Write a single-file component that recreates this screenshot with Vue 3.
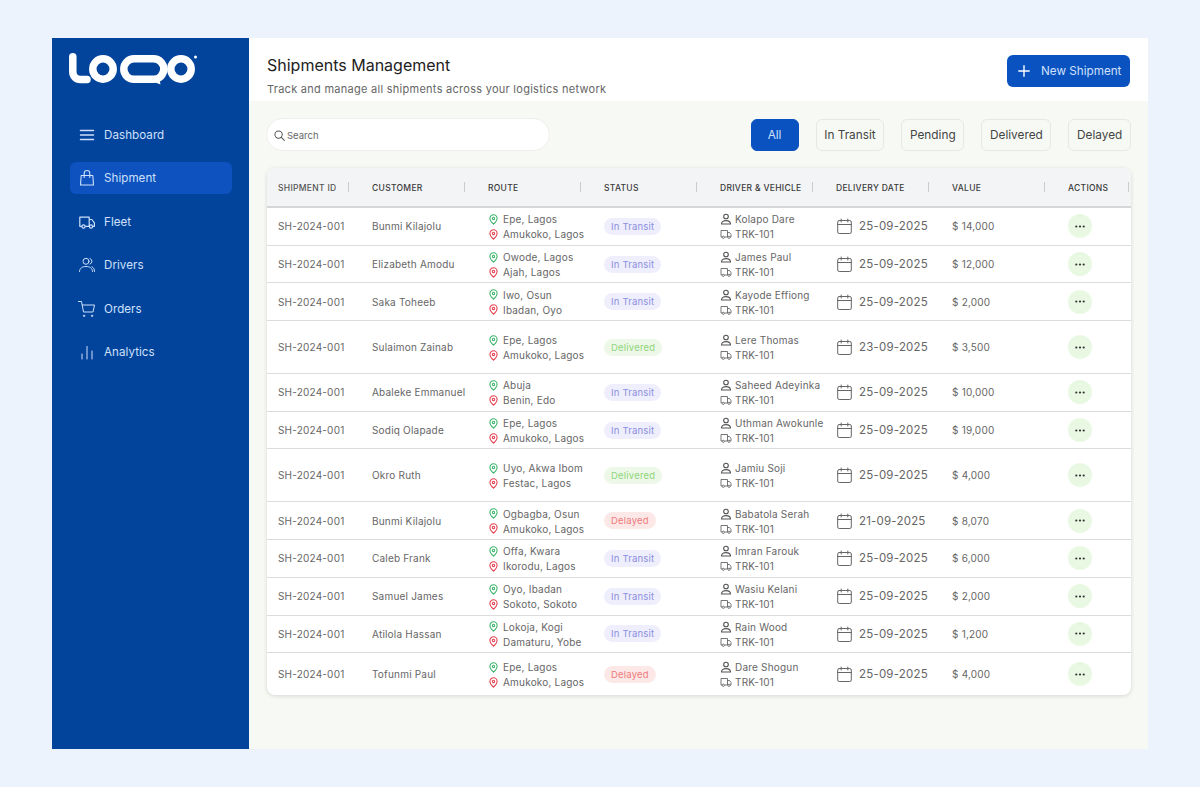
<template>
  <div class="page">
    <div class="frame">
      <aside class="sidebar">
        <svg class="logo" width="130" height="34" viewBox="0 0 130 34" fill="none">
          <path d="M3.800 3.800v15.200a7.500 7.500 0 0 0 7.500 7.500h6.700" stroke="#fff" stroke-width="7.500" stroke-linecap="round" stroke-linejoin="round" />
          <circle cx="34" cy="16" r="10.200" stroke="#fff" stroke-width="7.500" />
          <rect x="54.800" y="5.800" width="40" height="20.500" rx="10.200" stroke="#fff" stroke-width="7.500" />
          <path d="M80 27h10.500l1 4.500z" fill="#fff" />
          <circle cx="112" cy="16" r="10.200" stroke="#fff" stroke-width="7.500" />
          <circle cx="126.500" cy="4" r="1.500" fill="#fff" />
        </svg>
        <nav class="nav">
          <a class="nav-item">
            <svg class="nav-icon" viewBox="0 0 16 16" fill="none" stroke="currentColor" stroke-width="1.500" stroke-linecap="round"><path d="M1.500 3.500h13M1.500 8h13M1.500 12.500h13" /></svg>
            Dashboard
          </a>
          <a class="nav-item active">
            <svg class="nav-icon" viewBox="0 0 16 16" fill="none" stroke="currentColor" stroke-width="1.100" stroke-linejoin="round"><path d="M2.200 5.500h11.600l.7 9.500H1.500z" /><path d="M5.200 8V3.300a2.800 2.800 0 0 1 5.600 0V8" /></svg>
            Shipment
          </a>
          <a class="nav-item">
            <svg class="nav-icon" viewBox="0 0 16 16" fill="none" stroke="currentColor" stroke-width="1.200" stroke-linejoin="round"><path d="M2.800 12.300H.8V3.200h9.400v9.100H6.200M10.200 5.500h2.600l2.600 3.300v3.500h-1.600M10.200 12.300h.2" /><circle cx="4.500" cy="12.500" r="1.600" /><circle cx="12" cy="12.500" r="1.600" /></svg>
            Fleet
          </a>
          <a class="nav-item">
            <svg class="nav-icon" viewBox="0 0 16 16" fill="none" stroke="currentColor" stroke-width="1" stroke-linecap="round"><circle cx="7" cy="4.300" r="3" /><path d="M.5 14.500c0-3.400 2.800-5 6.500-5s6.500 1.600 6.500 5M11 1.500a3 3 0 0 1 0 5.600M13 9.800c1.600.7 2.500 2.400 2.500 4.700" /></svg>
            Drivers
          </a>
          <a class="nav-item">
            <svg class="nav-icon" viewBox="0 0 16 16" fill="none" stroke="currentColor" stroke-width="1" stroke-linecap="round" stroke-linejoin="round"><path d="M-.5 .5H2.500l2 10.500h9.500L15.500 4H3.300" /><circle cx="5" cy="14.800" r=".7" /><circle cx="13" cy="14.800" r=".7" /></svg>
            Orders
          </a>
          <a class="nav-item">
            <svg class="nav-icon" viewBox="0 0 16 16" fill="none" stroke="currentColor" stroke-width="1" stroke-linecap="round"><path d="M3 15V10M8 15V2.500M13 15V7" /></svg>
            Analytics
          </a>
        </nav>
      </aside>

      <main class="main">
        <header class="topbar">
          <div>
            <h1>Shipments Management</h1>
            <p>Track and manage all shipments across your logistics network</p>
          </div>
          <button class="new-btn">
            <svg width="12" height="12" viewBox="0 0 12 12" fill="none" stroke="#fff" stroke-width="1.400" stroke-linecap="round"><path d="M6 .8v10.400M.8 6h10.400" /></svg>
            New Shipment
          </button>
        </header>

        <section class="content">
          <div class="toolbar">
            <div class="search">
              <svg width="11" height="11" viewBox="0 0 12 12" fill="none" stroke="#555" stroke-width="1.100" stroke-linecap="round"><circle cx="5" cy="5" r="4" /><path d="M8 8l3.300 3.300" /></svg>
              Search
            </div>
            <div class="filters">
              <button v-for="f in filters" :key="f" class="filter" :class="{ on: f === 'All' }">{{ f }}</button>
            </div>
          </div>

          <div class="table">
            <div class="row head">
              <div v-for="h in headers" :key="h" class="th"><span>{{ h }}</span></div>
            </div>
            <div v-for="(s, i) in shipments" :key="i" class="row" :class="{ tall: s.status === 'Delivered', last: i === shipments.length - 1 }">
              <div class="td">SH-2024-001</div>
              <div class="td">{{ s.customer }}</div>
              <div class="td stack">
                <div class="line route">
                  <svg class="pin" viewBox="0 0 10 12" fill="none" stroke="#3db56b" stroke-width="1.200"><path d="M5 11.200C2.600 8.900 1 7 1 4.800a4 4 0 0 1 8 0C9 7 7.400 8.900 5 11.200z" /><circle cx="5" cy="4.800" r="1.300" /></svg>
                  {{ s.from }}
                </div>
                <div class="line route">
                  <svg class="pin" viewBox="0 0 10 12" fill="none" stroke="#e5404f" stroke-width="1.200"><path d="M5 11.200C2.600 8.900 1 7 1 4.800a4 4 0 0 1 8 0C9 7 7.400 8.900 5 11.200z" /><circle cx="5" cy="4.800" r="1.300" /></svg>
                  {{ s.to }}
                </div>
              </div>
              <div class="td">
                <span class="badge" :class="s.status.replace(' ', '').toLowerCase()">{{ s.status }}</span>
              </div>
              <div class="td stack">
                <div class="line driver">
                  <svg class="small-icon" viewBox="0 0 12 12" fill="none" stroke="#555" stroke-width="1.100" stroke-linecap="round"><circle cx="6" cy="3.500" r="2.300" /><path d="M1.500 11c0-2.400 2-3.400 4.500-3.400s4.500 1 4.500 3.400z" /></svg>
                  {{ s.driver }}
                </div>
                <div class="line driver">
                  <svg class="small-icon" viewBox="0 0 12 12" fill="none" stroke="#666" stroke-width=".9" stroke-linejoin="round"><path d="M2.200 9H1V2.500h6.500V9H4.500M7.500 4.500h2l1.500 2V9h-.8M7.500 9h.3" /><circle cx="3.300" cy="9.300" r="1.100" /><circle cx="9" cy="9.300" r="1.100" /></svg>
                  TRK-101
                </div>
              </div>
              <div class="td date">
                <svg width="15" height="16" viewBox="0 0 15 16" fill="none" stroke="#666" stroke-width="1" stroke-linecap="round"><rect x=".7" y="2.500" width="13.600" height="13" rx="1.500" /><path d="M.7 6.500h13.600M4.200 1v3M10.800 1v3" /></svg>
                {{ s.date }}
              </div>
              <div class="td">$ {{ s.value }}</div>
              <div class="td">
                <button class="action">
                  <svg width="10" height="3" viewBox="0 0 10 3" fill="#333"><circle cx="1.300" cy="1.500" r="1.100" /><circle cx="5" cy="1.500" r="1.100" /><circle cx="8.700" cy="1.500" r="1.100" /></svg>
                </button>
              </div>
            </div>
          </div>
        </section>
      </main>
    </div>
  </div>
</template>

<script setup>
const filters = ['All', 'In Transit', 'Pending', 'Delivered', 'Delayed']
const headers = ['SHIPMENT ID', 'CUSTOMER', 'ROUTE', 'STATUS', 'DRIVER & VEHICLE', 'DELIVERY DATE', 'VALUE', 'ACTIONS']

const shipments = [
  { customer: 'Bunmi Kilajolu', from: 'Epe, Lagos', to: 'Amukoko, Lagos', status: 'In Transit', driver: 'Kolapo Dare', date: '25-09-2025', value: '14,000' },
  { customer: 'Elizabeth Amodu', from: 'Owode, Lagos', to: 'Ajah, Lagos', status: 'In Transit', driver: 'James Paul', date: '25-09-2025', value: '12,000' },
  { customer: 'Saka Toheeb', from: 'Iwo, Osun', to: 'Ibadan, Oyo', status: 'In Transit', driver: 'Kayode Effiong', date: '25-09-2025', value: '2,000' },
  { customer: 'Sulaimon Zainab', from: 'Epe, Lagos', to: 'Amukoko, Lagos', status: 'Delivered', driver: 'Lere Thomas', date: '23-09-2025', value: '3,500' },
  { customer: 'Abaleke Emmanuel', from: 'Abuja', to: 'Benin, Edo', status: 'In Transit', driver: 'Saheed Adeyinka', date: '25-09-2025', value: '10,000' },
  { customer: 'Sodiq Olapade', from: 'Epe, Lagos', to: 'Amukoko, Lagos', status: 'In Transit', driver: 'Uthman Awokunle', date: '25-09-2025', value: '19,000' },
  { customer: 'Okro Ruth', from: 'Uyo, Akwa Ibom', to: 'Festac, Lagos', status: 'Delivered', driver: 'Jamiu Soji', date: '25-09-2025', value: '4,000' },
  { customer: 'Bunmi Kilajolu', from: 'Ogbagba, Osun', to: 'Amukoko, Lagos', status: 'Delayed', driver: 'Babatola Serah', date: '21-09-2025', value: '8,070' },
  { customer: 'Caleb Frank', from: 'Offa, Kwara', to: 'Ikorodu, Lagos', status: 'In Transit', driver: 'Imran Farouk', date: '25-09-2025', value: '6,000' },
  { customer: 'Samuel James', from: 'Oyo, Ibadan', to: 'Sokoto, Sokoto', status: 'In Transit', driver: 'Wasiu Kelani', date: '25-09-2025', value: '2,000' },
  { customer: 'Atilola Hassan', from: 'Lokoja, Kogi', to: 'Damaturu, Yobe', status: 'In Transit', driver: 'Rain Wood', date: '25-09-2025', value: '1,200' },
  { customer: 'Tofunmi Paul', from: 'Epe, Lagos', to: 'Amukoko, Lagos', status: 'Delayed', driver: 'Dare Shogun', date: '25-09-2025', value: '4,000' }
]
</script>

<style scoped>
.page {
  height: 787px;
  box-sizing: border-box;
  padding: 38px 52px;
  background: #edf3fd;
  font-family: Inter, 'Liberation Sans', sans-serif;
}

.frame {
  display: flex;
  height: 711px;
}

.sidebar {
  width: 197px;
  flex-shrink: 0;
  box-sizing: border-box;
  padding: 15px 17px 0 18px;
  background: #02449c;
}

.logo {
  display: block;
  margin-left: -1px;
}

.nav {
  display: flex;
  flex-direction: column;
  gap: 11.600px;
  margin-top: 31px;
}

.nav-item {
  display: flex;
  align-items: center;
  gap: 9px;
  height: 32px;
  box-sizing: border-box;
  padding: 1px 0 0 9px;
  border-radius: 6px;
  color: #cfe0fb;
  font-size: 11.600px;
  letter-spacing: 0.05px;
}

.nav-item.active {
  background: #0d52be;
}

.nav-icon {
  width: 16px;
  height: 16px;
  flex-shrink: 0;
  overflow: visible;
}

.main {
  flex: 1;
  display: flex;
  flex-direction: column;
  min-width: 0;
}

.topbar {
  height: 63px;
  box-sizing: border-box;
  display: flex;
  justify-content: space-between;
  align-items: flex-start;
  padding: 16px 18px 0 18px;
  background: #fff;
}

h1 {
  margin: 0;
  font-size: 16px;
  line-height: 22px;
  font-weight: 400;
  color: #222;
}

.topbar p {
  margin: 5px 0 0;
  font-size: 11px;
  line-height: 16px;
  letter-spacing: 0.27px;
  color: #666;
}

.new-btn {
  display: flex;
  align-items: center;
  gap: 11px;
  width: 123px;
  height: 32px;
  margin-top: 1px;
  padding: 0 0 0 11px;
  border: 0;
  border-radius: 6px;
  background: #0a52bf;
  color: #cfe0fb;
  font-family: inherit;
  font-size: 11.700px;
}

.content {
  flex: 1;
  padding: 17px 17px 0 18px;
  background: #f7faf4;
}

.toolbar {
  display: flex;
  justify-content: space-between;
  align-items: center;
  height: 33px;
}

.search {
  display: flex;
  align-items: center;
  gap: 2px;
  width: 284px;
  height: 33px;
  box-sizing: border-box;
  margin-left: -1px;
  padding: 1px 0 0 7px;
  border: 1px solid #eeeeec;
  border-radius: 17px;
  background: #fff;
  color: #666;
  font-size: 9.500px;
}

.filters {
  display: flex;
  gap: 17px;
}

.filter {
  height: 32px;
  padding: 0 7.700px;
  border: 1px solid #e6e8e3;
  border-radius: 6px;
  background: #f7faf4;
  color: #444;
  font-family: inherit;
  font-size: 11.800px;
}

.filter.on {
  width: 48px;
  background: #0a52bf;
  border-color: #0a52bf;
  color: #cfe0fb;
}

.table {
  margin-top: 17px;
  width: 864px;
  border-radius: 8px;
  background: #fff;
  box-shadow: 0 1px 4px rgba(0, 0, 0, 0.14);
  overflow: hidden;
}

.row {
  display: grid;
  grid-template-columns: 94px repeat(6, 116px) 74px;
  height: 37.700px;
  border-bottom: 1px solid #dcdcdc;
  box-sizing: border-box;
}

.row.head {
  height: 40px;
  border-bottom: 2px solid #d6d6d6;
  background: #f3f4f6;
}

.row.tall {
  height: 53px;
}

.row.last {
  height: 42px;
  border-bottom: 0;
}

.th {
  position: relative;
  display: flex;
  align-items: center;
  padding: 1px 0 0 11px;
  font-size: 8.500px;
  font-weight: 500;
  letter-spacing: 0.3px;
  color: #3a3a3a;
}

.th:first-child {
  color: #555;
}

.th span {
  white-space: nowrap;
}

.th::after {
  content: '';
  position: absolute;
  right: 12px;
  top: 14px;
  height: 10px;
  width: 1px;
  background: #ccc;
}

.th:last-child::after {
  right: 2px;
}

.td {
  display: flex;
  align-items: center;
  padding-left: 11px;
  min-width: 0;
  white-space: nowrap;
  font-size: 10px;
  letter-spacing: 0.2px;
  color: #666;
}

.td.stack {
  flex-direction: column;
  align-items: flex-start;
  justify-content: center;
  gap: 0;
  padding-top: 1px;
}

.line {
  display: flex;
  align-items: center;
  height: 15px;
}

.line.route {
  gap: 5px;
  padding-left: 1px;
}

.line.driver {
  gap: 3px;
}

.pin {
  width: 9px;
  height: 11px;
}

.small-icon {
  width: 12px;
  height: 12px;
}

.badge {
  height: 17px;
  line-height: 17px;
  padding: 0 7px;
  border-radius: 9px;
  font-size: 9.500px;
}

.intransit {
  background: #eeeefc;
  color: #8c8fe0;
}

.delivered {
  background: #edf8e8;
  color: #8fd67c;
}

.delayed {
  background: #fde8e8;
  color: #ee7b7b;
}

.td.date {
  gap: 7px;
  padding-left: 12px;
  font-size: 11.500px;
  letter-spacing: 0.2px;
}

.action {
  display: flex;
  align-items: center;
  justify-content: center;
  width: 24px;
  height: 24px;
  padding: 0;
  border: 0;
  border-radius: 50%;
  background: #e9f8e3;
}
</style>
